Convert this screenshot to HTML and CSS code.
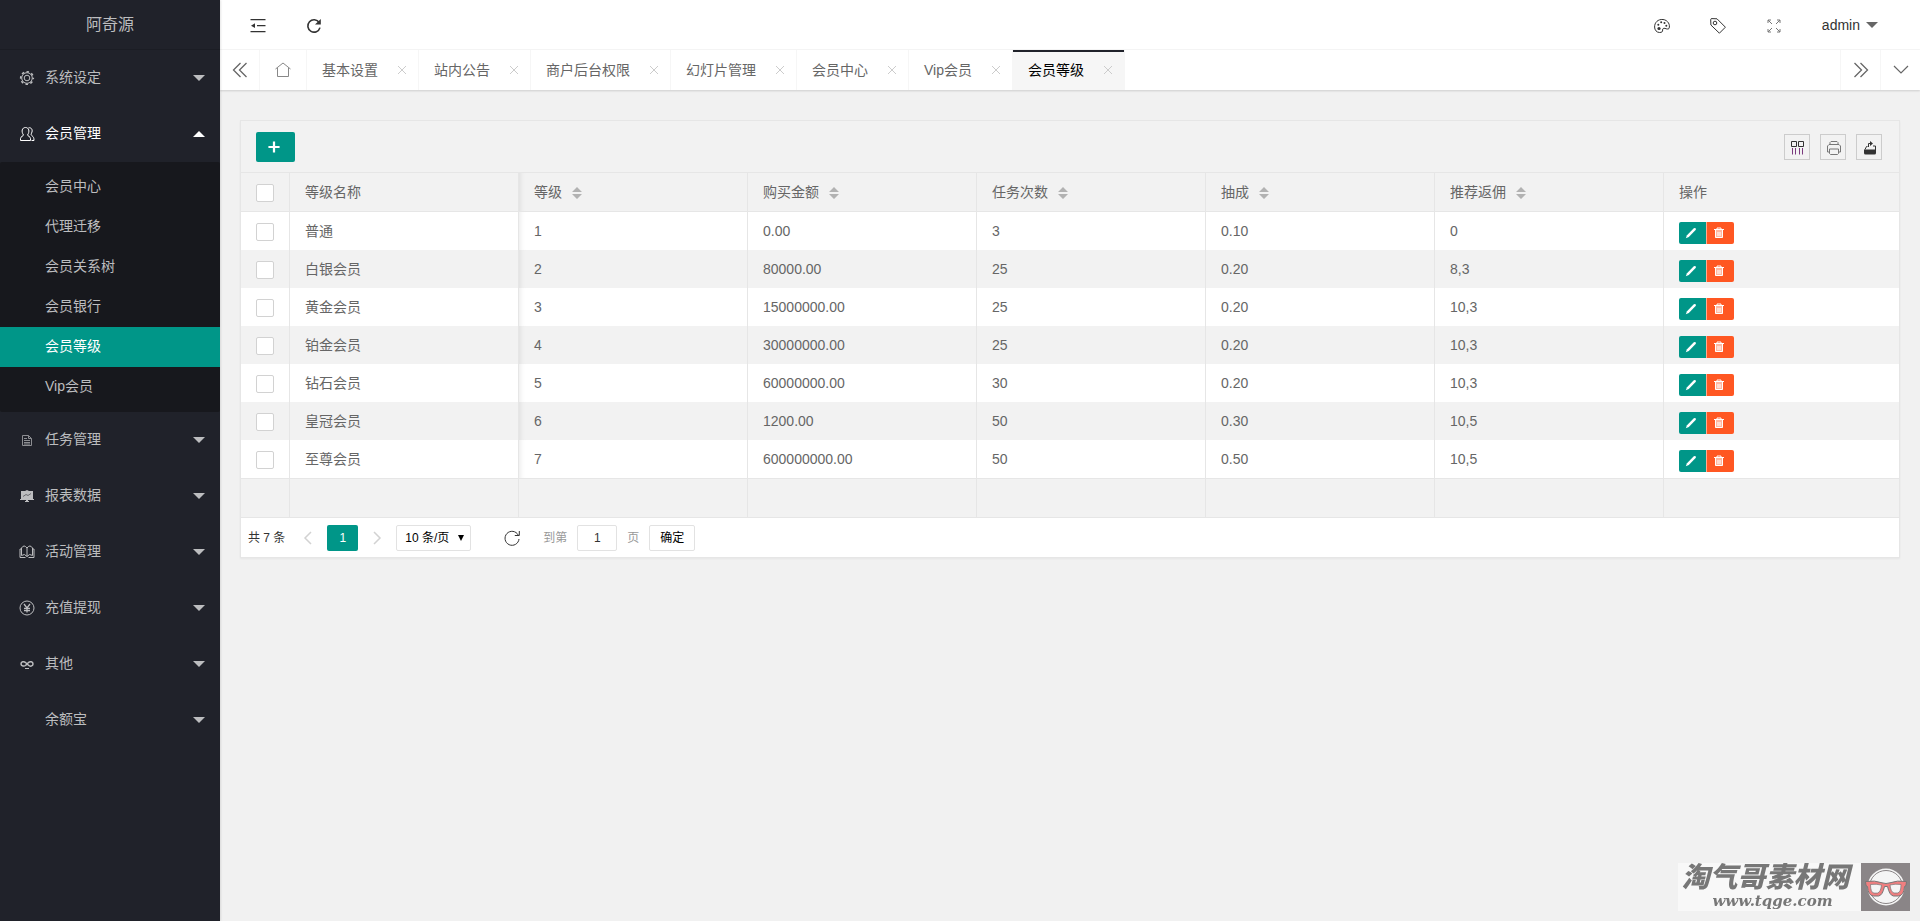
FILE: index.html
```html
<!DOCTYPE html>
<html lang="zh-CN">
<head>
<meta charset="utf-8">
<title>会员等级</title>
<link rel="stylesheet" href="styles.css">
</head>
<body>
<svg class="sprite" aria-hidden="true">
  <symbol id="i-gear" viewBox="0 0 16 16"><g fill="none" stroke="currentColor"><circle cx="8" cy="8" r="6.300" stroke-width="1.600" stroke-dasharray="2.474" stroke-dashoffset="1.237"/><circle cx="8" cy="8" r="5.300"/><circle cx="8" cy="8" r="2.800"/></g></symbol>
  <symbol id="i-user" viewBox="0 0 16 16"><g fill="none" stroke="currentColor"><path d="M4.500 9C2 5.500 3 1.500 6.500 1.500S11 5.500 8.500 9c0 1 3 1.500 3 3.500v2h-10v-2c0-2 3-2.500 3-3.500z"/><path d="M9.500 1.800c3-.6 4.700 2.200 3 5.400-.8 1.600-.2 2 .8 2.800 1 .8 1.700 1.500 1.700 4.500h-2.500"/></g></symbol>
  <symbol id="i-doc" viewBox="0 0 16 16"><path fill="none" stroke="currentColor" d="M3.500 3.500h6l3 3v7h-9zM9.500 3.500v3h3M5 6.500h3M5 8.500h6M5 10.500h6M5 12h6"/></symbol>
  <symbol id="i-board" viewBox="0 0 16 16"><path fill="currentColor" d="M2 3h4l2-1 2 1h4v8h1v1H9v1h1v1H6v-1h1v-1H1v-1h1z"/><path fill="none" stroke="#6a6b70" d="M4 8.500l3-2 2 1 3-2"/></symbol>
  <symbol id="i-book" viewBox="0 0 16 16"><path fill="none" stroke="currentColor" d="M8 12.500V4Q5 0 2.500 4v7.500Q5.500 9 8 12.500 10.500 9 13.500 11.500V4Q11 0 8 4M2.500 5H1v8.500h5.500M13.500 5H15v8.500H9.500"/></symbol>
  <symbol id="i-yen" viewBox="0 0 16 16"><g fill="none" stroke="currentColor"><circle cx="8" cy="8" r="7"/><path stroke-width="1.300" d="M5 4l3 4 3-4M8 8v4.500M5 8.300h6M5 10.500h6"/></g></symbol>
  <symbol id="i-inf" viewBox="0 0 16 16"><path fill="none" stroke="currentColor" stroke-width="1.500" d="M6.500 9.500C5.500 10.300 2 10.500 2 8s3-3 4.500-1.500L9.500 9.300C11 10.800 14 10.300 14 8s-3-3-4.500-1.500L6.500 9.500"/><path stroke="currentColor" d="M6 12.500h4"/></symbol>
  <symbol id="i-fold" viewBox="0 0 16 16"><path fill="none" stroke="currentColor" stroke-width="1.300" d="M.5 1.700h15M7 7.700h8.500M.5 13.700h15"/><path fill="currentColor" d="M1 7.700l4-2.400v4.800z"/></symbol>
  <symbol id="i-reload" viewBox="0 0 16 16"><path fill="none" stroke="currentColor" stroke-width="1.600" d="M13.200 4.500A6.200 6.200 0 1 0 14 9.600"/><path fill="currentColor" d="M14.800 1v5.500H9z"/></symbol>
  <symbol id="i-left2" viewBox="0 0 16 16"><path fill="none" stroke="currentColor" stroke-width="1.300" d="M8.500 1l-7 7 7 7M14.500 1l-7 7 7 7"/></symbol>
  <symbol id="i-right2" viewBox="0 0 16 16"><path fill="none" stroke="currentColor" stroke-width="1.300" d="M1.500 1l7 7-7 7M7.500 1l7 7-7 7"/></symbol>
  <symbol id="i-down" viewBox="0 0 16 16"><path fill="none" stroke="currentColor" stroke-width="1.200" d="M1 4l7 7 7-7"/></symbol>
  <symbol id="i-home" viewBox="0 0 16 16"><path fill="none" stroke="currentColor" d="M.5 7L8 1l7.500 6M2.500 6v8.500h11V6"/></symbol>
  <symbol id="i-x" viewBox="0 0 10 10"><path fill="none" stroke="currentColor" d="M1 1l8 8M9 1L1 9"/></symbol>
  <symbol id="i-palette" viewBox="0 0 16 16"><path fill="none" stroke="currentColor" d="M9 1.500C4 1 .5 4.500.6 9c0 3 2 5.500 5 5.500 2.500 0 3.200-1 3-2.500-.1-1.500 1-2 2.400-1.600 1.500.5 3 1.100 4 .1C16.500 7 14 2 9 1.500z"/><g fill="currentColor"><circle cx="5" cy="10.500" r="1.600"/><circle cx="4.300" cy="6.800" r="1"/><circle cx="7.200" cy="4.300" r="1"/><circle cx="10.500" cy="5" r="1"/><circle cx="12.300" cy="7.800" r="1"/></g></symbol>
  <symbol id="i-tag" viewBox="0 0 16 16"><g fill="none" stroke="currentColor"><path d="M.7 1.500Q.8.500 2 .6l5 .2 8.400 8.400-6 6L.9 7z"/><circle cx="5" cy="5" r="1.800"/></g></symbol>
  <symbol id="i-full" viewBox="0 0 16 16"><path fill="none" stroke="currentColor" d="M5 2H2v3M2 2l4 4M11 2h3v3M14 2l-4 4M2 11v3h3M2 14l4-4M14 11v3h-3M14 14l-4-4"/></symbol>
  <symbol id="i-cols" viewBox="0 0 16 16"><path fill="none" stroke="currentColor" d="M1.500 1.500h5v5h-5zM8.500 1.500h5v5h-5z"/><path fill="none" stroke="#7b3a7e" d="M2.500 8v6.500M5.500 8v6.500M9.500 8v6.500M12.500 8v6.500"/></symbol>
  <symbol id="i-print" viewBox="0 0 16 16"><path fill="none" stroke="currentColor" d="M4 4V2.500L5 1.500h6l1 1V4M3 12H1.500V6L3 4.500h10L14.500 6v6H13M3.500 9h9v4.500l-1 1h-7l-1-1z"/></symbol>
  <symbol id="i-export" viewBox="0 0 16 16"><path fill="currentColor" d="M2 9.500h12V13q0 1.500-1.500 1.500h-9Q2 14.500 2 13z"/><path fill="none" stroke="currentColor" d="M3 9.500l1.500-3h1M11 6h2.500v4M6.500 7V3.500h3"/><path fill="currentColor" d="M8 1l3 2.500L8 6z"/></symbol>
  <symbol id="i-plus" viewBox="0 0 14 14"><path stroke="currentColor" stroke-width="2.600" d="M7 .5v13M.5 7h13"/></symbol>
  <symbol id="i-pen" viewBox="0 0 12 12"><path fill="currentColor" d="M.8 11.200l1.200-3L8.800 1.300q1-.8 1.800 0 .8.900 0 1.800L3.800 10z"/></symbol>
  <symbol id="i-trash" viewBox="0 0 12 12"><path fill="#ffb8a2" d="M2.500 3h7v8h-7z"/><path fill="none" stroke="currentColor" d="M1 2.500h10M4 2V1h4v1M2.500 3v7.500h7V3M5 5v4M7 5v4"/></symbol>
  <symbol id="i-prev" viewBox="0 0 16 16"><path fill="none" stroke="currentColor" stroke-width="1.500" d="M11 2L5 8l6 6"/></symbol>
  <symbol id="i-next" viewBox="0 0 16 16"><path fill="none" stroke="currentColor" stroke-width="1.500" d="M5 2l6 6-6 6"/></symbol>
  <symbol id="i-refresh" viewBox="0 0 16 16"><path fill="none" stroke="currentColor" d="M14.200 5A7 7 0 1 0 15 9M15.300 1v4.500h-4.500"/></symbol>
</svg>

<div class="app">
  <aside class="side">
    <div class="logo">阿奇源</div>
    <nav class="menu">
      <a class="item" href="#"><svg class="mi"><use href="#i-gear"/></svg><span>系统设定</span><i class="caret"></i></a>
      <a class="item open" href="#"><svg class="mi"><use href="#i-user"/></svg><span>会员管理</span><i class="caret"></i></a>
      <div class="sub">
        <a href="#">会员中心</a>
        <a href="#">代理迁移</a>
        <a href="#">会员关系树</a>
        <a href="#">会员银行</a>
        <a href="#" class="on">会员等级</a>
        <a href="#">Vip会员</a>
      </div>
      <a class="item" href="#"><svg class="mi dim"><use href="#i-doc"/></svg><span>任务管理</span><i class="caret"></i></a>
      <a class="item" href="#"><svg class="mi"><use href="#i-board"/></svg><span>报表数据</span><i class="caret"></i></a>
      <a class="item" href="#"><svg class="mi"><use href="#i-book"/></svg><span>活动管理</span><i class="caret"></i></a>
      <a class="item" href="#"><svg class="mi"><use href="#i-yen"/></svg><span>充值提现</span><i class="caret"></i></a>
      <a class="item" href="#"><svg class="mi"><use href="#i-inf"/></svg><span>其他</span><i class="caret"></i></a>
      <a class="item" href="#"><svg class="mi"></svg><span>余额宝</span><i class="caret"></i></a>
    </nav>
  </aside>

  <div class="main">
    <header class="top">
      <div class="top-group start">
        <a href="#" aria-label="收起菜单"><svg><use href="#i-fold"/></svg></a>
        <a href="#" aria-label="刷新"><svg><use href="#i-reload"/></svg></a>
      </div>
      <div class="top-group">
        <a href="#" aria-label="主题"><svg><use href="#i-palette"/></svg></a>
        <a href="#" aria-label="便签"><svg><use href="#i-tag"/></svg></a>
        <a href="#" aria-label="全屏"><svg class="soft"><use href="#i-full"/></svg></a>
        <a href="#" class="admin">admin<i class="caret"></i></a>
      </div>
    </header>
    <div class="tabs">
      <button class="ctl" aria-label="向左"><svg><use href="#i-left2"/></svg></button>
      <a class="home" href="#" aria-label="主页"><svg><use href="#i-home"/></svg></a>
      <div class="tab"><a href="#">基本设置</a><button aria-label="关闭"><svg><use href="#i-x"/></svg></button></div>
      <div class="tab"><a href="#">站内公告</a><button aria-label="关闭"><svg><use href="#i-x"/></svg></button></div>
      <div class="tab"><a href="#">商户后台权限</a><button aria-label="关闭"><svg><use href="#i-x"/></svg></button></div>
      <div class="tab"><a href="#">幻灯片管理</a><button aria-label="关闭"><svg><use href="#i-x"/></svg></button></div>
      <div class="tab"><a href="#">会员中心</a><button aria-label="关闭"><svg><use href="#i-x"/></svg></button></div>
      <div class="tab"><a href="#">Vip会员</a><button aria-label="关闭"><svg><use href="#i-x"/></svg></button></div>
      <div class="tab active"><a href="#">会员等级</a><button aria-label="关闭"><svg><use href="#i-x"/></svg></button></div>
      <div class="grow"></div>
      <button class="ctl right" aria-label="向右"><svg><use href="#i-right2"/></svg></button>
      <button class="ctl right" aria-label="更多"><svg><use href="#i-down"/></svg></button>
    </div>

    <main class="card">
      <div class="toolbar">
        <button class="add" aria-label="添加"><svg><use href="#i-plus"/></svg></button>
        <div class="tools">
          <button aria-label="筛选列"><svg><use href="#i-cols"/></svg></button>
          <button aria-label="打印"><svg class="soft"><use href="#i-print"/></svg></button>
          <button aria-label="导出"><svg><use href="#i-export"/></svg></button>
        </div>
      </div>
      <table class="grid">
        <colgroup><col class="c-check"><col class="c"><col class="c"><col class="c"><col class="c"><col class="c"><col class="c"><col></colgroup>
        <thead>
          <tr><th><input type="checkbox" aria-label="全选"></th><th>等级名称</th><th class="fix">等级<i class="sort"></i></th><th>购买金额<i class="sort"></i></th><th>任务次数<i class="sort"></i></th><th>抽成<i class="sort"></i></th><th>推荐返佣<i class="sort"></i></th><th>操作</th></tr>
        </thead>
        <tbody>
          <tr><td><input type="checkbox" aria-label="选择"></td><td>普通</td><td class="fix">1</td><td>0.00</td><td>3</td><td>0.10</td><td>0</td><td><div class="ops"><button aria-label="编辑"><svg><use href="#i-pen"/></svg></button><button class="del" aria-label="删除"><svg><use href="#i-trash"/></svg></button></div></td></tr>
          <tr><td><input type="checkbox" aria-label="选择"></td><td>白银会员</td><td class="fix">2</td><td>80000.00</td><td>25</td><td>0.20</td><td>8,3</td><td><div class="ops"><button aria-label="编辑"><svg><use href="#i-pen"/></svg></button><button class="del" aria-label="删除"><svg><use href="#i-trash"/></svg></button></div></td></tr>
          <tr><td><input type="checkbox" aria-label="选择"></td><td>黄金会员</td><td class="fix">3</td><td>15000000.00</td><td>25</td><td>0.20</td><td>10,3</td><td><div class="ops"><button aria-label="编辑"><svg><use href="#i-pen"/></svg></button><button class="del" aria-label="删除"><svg><use href="#i-trash"/></svg></button></div></td></tr>
          <tr><td><input type="checkbox" aria-label="选择"></td><td>铂金会员</td><td class="fix">4</td><td>30000000.00</td><td>25</td><td>0.20</td><td>10,3</td><td><div class="ops"><button aria-label="编辑"><svg><use href="#i-pen"/></svg></button><button class="del" aria-label="删除"><svg><use href="#i-trash"/></svg></button></div></td></tr>
          <tr><td><input type="checkbox" aria-label="选择"></td><td>钻石会员</td><td class="fix">5</td><td>60000000.00</td><td>30</td><td>0.20</td><td>10,3</td><td><div class="ops"><button aria-label="编辑"><svg><use href="#i-pen"/></svg></button><button class="del" aria-label="删除"><svg><use href="#i-trash"/></svg></button></div></td></tr>
          <tr><td><input type="checkbox" aria-label="选择"></td><td>皇冠会员</td><td class="fix">6</td><td>1200.00</td><td>50</td><td>0.30</td><td>10,5</td><td><div class="ops"><button aria-label="编辑"><svg><use href="#i-pen"/></svg></button><button class="del" aria-label="删除"><svg><use href="#i-trash"/></svg></button></div></td></tr>
          <tr><td><input type="checkbox" aria-label="选择"></td><td>至尊会员</td><td class="fix">7</td><td>600000000.00</td><td>50</td><td>0.50</td><td>10,5</td><td><div class="ops"><button aria-label="编辑"><svg><use href="#i-pen"/></svg></button><button class="del" aria-label="删除"><svg><use href="#i-trash"/></svg></button></div></td></tr>
        </tbody>
        <tfoot>
          <tr><td></td><td></td><td></td><td></td><td></td><td></td><td></td><td></td></tr>
        </tfoot>
      </table>
      <div class="pager">
        <span class="count">共 7 条</span>
        <a class="arrow prev" href="#" aria-label="上一页"><svg><use href="#i-prev"/></svg></a>
        <a class="cur" href="#">1</a>
        <a class="arrow" href="#" aria-label="下一页"><svg><use href="#i-next"/></svg></a>
        <span class="limit"><select aria-label="每页条数"><option>10 条/页</option></select></span>
        <a class="refresh" href="#" aria-label="刷新表格"><svg><use href="#i-refresh"/></svg></a>
        <label class="skip" for="page">到第</label>
        <input class="page" id="page" type="text" value="1">
        <span class="skip">页</span>
        <button class="go">确定</button>
      </div>
    </main>
  </div>
</div>

<div class="mark">
  <div class="mark-text"><b>淘气哥素材网</b><span>www.tqge.com</span></div>
  <svg class="mark-logo" viewBox="0 0 49 48"><rect width="49" height="48" fill="#8a8587"/><circle cx="25" cy="24" r="18.500" fill="#f5f5f5"/><circle cx="25" cy="24" r="16.500" fill="none" stroke="#8a8587"/><path fill="#f07f80" stroke="#777" d="M4.500 18.500q9-1.500 17.500 1.500 3 1 6 0 8.500-3 17.500-1.500l-.5 4-1.500 1q-.5 9-6 9.500h-5q-4-.5-6-9.500h-3q-2 9-6 9.500h-5q-5.500-.5-6-9.500l-1.500-1z"/><path fill="#f5f5f5" stroke="#777" stroke-width=".7" d="M9.500 21.500q6-.8 11 .6-.8 7-4 8h-3.500q-3.500-.4-3.500-8.600zM29 22q5-1.300 11-.5 0 8-3.500 8.500H33q-3.200-.8-4-8z"/></svg>
</div>
</body>
</html>
```
FILE: styles.css
```css
* { box-sizing: border-box; }
body {
  margin: 0;
  background: #f1f1f1;
  color: #333;
  font: 14px/24px "Liberation Sans", "Noto Sans CJK SC", sans-serif;
}
a { color: inherit; text-decoration: none; }
button, input, select { font: inherit; color: inherit; margin: 0; padding: 0; border: 0; background: none; }
svg { display: block; width: 16px; height: 16px; }
.sprite { position: absolute; width: 0; height: 0; }
.app { display: flex; min-height: 100vh; }

.side {
  flex: 0 0 220px;
  background: #20222a;
  color: #bcbdbf;
  box-shadow: 1px 0 2px rgba(0, 0, 0, .1);
  z-index: 1;
}
.logo { height: 50px; line-height: 49px; font-size: 16px; text-align: center; border-bottom: 1px solid #1b1d24; }
.item { display: flex; align-items: center; gap: 10px; height: 56px; padding: 0 15px 0 19px; }
.item span { flex: 1; padding-bottom: 2px; }
.mi { flex: none; }
.dim { opacity: .7; }
.caret { width: 0; height: 0; border: 6px solid transparent; border-top-color: currentColor; border-bottom-width: 0; }
.open { color: #fff; }
.open .caret { border-width: 0 6px 6px; border-bottom-color: #fff; }
.sub { background: #17181d; padding: 5px 0; border-radius: 2px; }
.sub a { display: block; height: 40px; line-height: 39px; padding-left: 45px; }
.sub .on { background: #009688; color: #fff; }

.main { flex: 1; min-width: 0; }
.top { display: flex; justify-content: space-between; height: 50px; background: #fff; border-bottom: 1px solid #f6f6f6; }
.top-group { display: flex; }
.top-group a { display: flex; align-items: center; height: 50px; padding: 0 20px; }
.top-group svg { margin-top: 2px; }
.top-group.start { padding-left: 10px; }
.top .admin { gap: 6px; padding-right: 42px; }
.top .admin .caret { color: #666; }

.tabs { display: flex; height: 40px; background: #fff; box-shadow: 0 1px 2px rgba(0, 0, 0, .15); color: #666; }
.ctl, .home { display: flex; align-items: center; justify-content: center; width: 40px; border-right: 1px solid #f6f6f6; }
.home { width: 47px; color: #888; }
.ctl.right { border-right: 0; border-left: 1px solid #f6f6f6; }
.grow { flex: 1; }
.tab { display: flex; align-items: center; gap: 19px; padding: 0 10px 0 15px; border-right: 1px solid #f6f6f6; white-space: nowrap; }
.tab button { width: 11px; color: #ccc; }
.tab button svg { width: 10px; height: 10px; }
.active { background: #f6f6f6; color: #000; box-shadow: inset 0 2px #20222a; }

.card { margin: 30px 20px; background: #fff; border: 1px solid #e6e6e6; box-shadow: 0 1px 2px rgba(0, 0, 0, .05); color: #666; }
.toolbar { display: flex; align-items: center; justify-content: space-between; height: 52px; padding: 0 17px 0 15px; background: #f2f2f2; border-bottom: 1px solid #e6e6e6; }
.add { display: flex; align-items: center; justify-content: center; width: 39px; height: 30px; padding-right: 3px; background: #009688; color: #fff; border-radius: 2px; }
.add svg { width: 12px; height: 12px; }
.tools { display: flex; gap: 10px; color: #333; }
.tools button { display: flex; align-items: center; justify-content: center; width: 26px; height: 26px; padding: 2px 0 0 2px; border: 1px solid #ccc; }
.soft { color: #777; }

.grid { width: 100%; table-layout: fixed; border-collapse: separate; border-spacing: 0; }
.c-check { width: 49px; }
.c { width: 229px; }
.grid th, .grid td { height: 38px; padding: 0 15px; text-align: left; font-weight: 400; border-right: 1px solid #e6e6e6; white-space: nowrap; }
.grid th:last-child, .grid td:last-child { border-right: 0; }
.grid th { height: 39px; background: #f2f2f2; border-bottom: 1px solid #e6e6e6; }
.grid tbody tr:nth-child(even) { background: #f2f2f2; }
.grid tfoot td { height: 40px; background: #f2f2f2; border-top: 1px solid #e6e6e6; border-bottom: 1px solid #e6e6e6; }
.fix { box-shadow: inset 6px 0 6px -6px rgba(0, 0, 0, .12); }
.grid input { appearance: none; display: block; width: 18px; height: 18px; margin-top: 2px; background: #fff; border: 1px solid #d2d2d2; border-radius: 2px; }
.sort { display: inline-block; width: 10px; height: 12px; margin-left: 10px; vertical-align: -2px; background: #b2b2b2; clip-path: polygon(50% 0, 100% 42%, 0 42%, 0 58%, 100% 58%, 50% 100%, 0 58%, 0 42%); }
.ops { display: flex; padding-top: 4px; }
.ops button { display: flex; align-items: center; justify-content: center; width: 27px; height: 22px; padding-right: 3px; background: #009688; color: #fff; border-radius: 2px 0 0 2px; }
.ops svg { width: 12px; height: 12px; }
.ops .del { width: 28px; background: #ff5722; border-left: 1px solid #ffab91; border-radius: 0 2px 2px 0; }

.pager { display: flex; align-items: center; height: 39px; padding: 0 7px; font-size: 12px; color: #333; }
.arrow { color: #d2d2d2; display: flex; justify-content: center; width: 38px; }
.prev { width: 42px; padding-left: 4px; }
.cur { width: 31px; height: 26px; line-height: 26px; text-align: center; background: #009688; color: #fff; border-radius: 2px; }
.limit select, .page, .go { display: block; height: 26px; border: 1px solid #e2e2e2; border-radius: 2px; background: #fff; color: #000; }
.limit { position: relative; width: 75px; }
.limit select { appearance: none; width: 100%; padding: 0 8px; }
.limit::after { content: ""; position: absolute; right: 7px; top: 10px; border: 3px solid transparent; border-top: 6px solid #000; border-bottom: 0; pointer-events: none; }
.refresh { padding: 0 16px 0 33px; color: #333; }
.skip { color: #999; padding: 0 10px 0 7px; }
.pager .page { width: 40px; text-align: center; color: #333; }
span.skip { padding: 0 10px; }
.go { width: 46px; }

.mark { position: fixed; right: 10px; bottom: 10px; display: flex; }
.mark-text { width: 183px; height: 48px; padding-right: 8px; background: #f8f8f8; color: #777; text-align: center; }
.mark-text b { display: block; font-size: 28px; line-height: 30px; font-weight: 900; font-style: italic; white-space: nowrap; }
.mark-text span { display: block; padding-left: 14px; font: italic bold 15px/16px "DejaVu Serif", serif; }
.mark-logo { width: 49px; height: 48px; }
```
